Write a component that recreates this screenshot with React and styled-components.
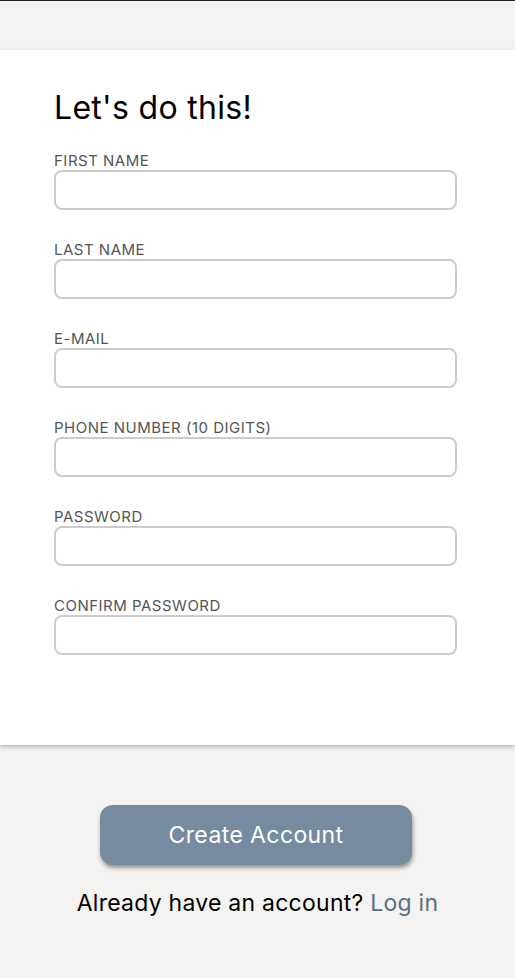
import React from 'react';
import styled, {createGlobalStyle} from 'styled-components';

const GlobalStyle = createGlobalStyle`
  body {
    margin: 0;
    background: #f4f3f1;
    font-family: Inter, 'Noto Sans', sans-serif;
  }
`;

const Page = styled.div`
  box-sizing: border-box;
  min-height: 978px;
  border-top: 1px solid #222;
  background: #f4f3f1;
  padding-top: 49px;
`;

const Card = styled.form`
  background: #fff;
  box-shadow: 0 2px 4px rgba(0, 0, 0, 0.25);
  padding: 38px 58px 90px 54px;
  display: flex;
  flex-direction: column;
`;

const Heading = styled.h1`
  margin: 0 0 26px;
  font-size: 32px;
  font-weight: 400;
  color: #000;
  letter-spacing: 0.3px;
`;

const Field = styled.label`
  display: flex;
  flex-direction: column;
  gap: 1px;
  margin-bottom: ${(p) => (p.$last ? 0 : '32px')};
`;

const LabelText = styled.span`
  font-size: 15px;
  line-height: 16px;
  color: #555;
  letter-spacing: 0.5px;
  text-transform: uppercase;
`;

const Input = styled.input`
  box-sizing: border-box;
  height: 40px;
  width: 100%;
  margin: 0;
  border: 2px solid #ccc;
  border-radius: 8px;
  background: #fff;
  font-size: 16px;
  padding: 0 10px;
  outline: none;
`;

const Footer = styled.div`
  display: flex;
  flex-direction: column;
  align-items: center;
  padding-top: 60px;
`;

const Button = styled.button`
  width: 312px;
  height: 60px;
  margin-right: 3px;
  border: none;
  border-radius: 13px;
  background: #768ba0;
  color: #fff;
  font-family: inherit;
  font-size: 23px;
  letter-spacing: 0.4px;
  box-shadow: 1px 3px 4px rgba(0, 0, 0, 0.4);
  cursor: pointer;
`;

const Prompt = styled.p`
  margin: 24px 0 0;
  font-size: 23px;
  letter-spacing: 0.25px;
  color: #000;
`;

const LoginLink = styled.a`
  color: #5c6c82;
  text-decoration: none;
`;

const fields = [
  {label: 'First Name', type: 'text'},
  {label: 'Last Name', type: 'text'},
  {label: 'E-mail', type: 'email'},
  {label: 'Phone Number (10 digits)', type: 'tel'},
  {label: 'Password', type: 'password'},
  {label: 'Confirm Password', type: 'password'}
];

function App() {
  return (
    <Page>
      <GlobalStyle />
      <Card>
        <Heading>Let's do this!</Heading>
        {fields.map(({label, type}, i) => (
          <Field key={label} $last={i === fields.length - 1}>
            <LabelText>{label}</LabelText>
            <Input type={type} />
          </Field>
        ))}
      </Card>
      <Footer>
        <Button type="button">Create Account</Button>
        <Prompt>
          Already have an account? <LoginLink href="#">Log in</LoginLink>
        </Prompt>
      </Footer>
    </Page>
  );
}

export default App;
